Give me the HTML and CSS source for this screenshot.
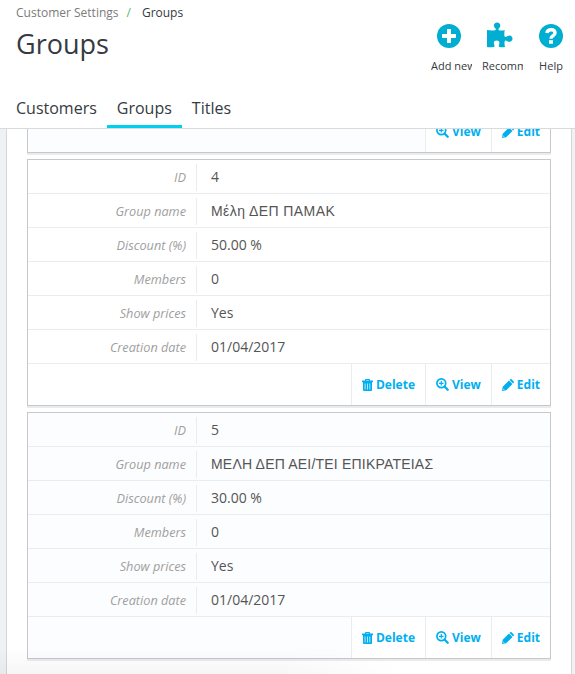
FILE: index.html
```html
<!DOCTYPE html>
<html lang="en">
<head>
<meta charset="utf-8">
<title>Groups</title>
<link rel="stylesheet" href="styles.css">
</head>
<body>
<svg class="defs" aria-hidden="true">
  <symbol id="trash" viewBox="0 0 11 12"><path fill-rule="evenodd" d="M0 1.500h3V.9Q3 0 3.900 0h3.200Q8 0 8 .9v.6h3V3.200H0zM4.200 1v.5h2.600V1zM1 3.200h9V11q0 1-1 1H2q-1 0-1-1zM2.700 4.600v5.800h.7V4.600zm2.400 0v5.800h.7V4.600zm2.400 0v5.800h.7V4.600z"/></symbol>
  <symbol id="view" viewBox="0 0 13 13"><circle cx="5.300" cy="5.300" r="4.400" fill="none" stroke="currentColor" stroke-width="1.700"/><path d="M8.500 8.500l3.200 3.200" stroke="currentColor" stroke-width="2.300" stroke-linecap="round"/><path d="M5.300 3v4.600M3 5.300h4.600" stroke="currentColor" stroke-width="1.200"/></symbol>
  <symbol id="edit" viewBox="0 0 12 12"><path fill-rule="evenodd" d="M0 12l.7-4.200 6.300-6.300 3.500 3.500-6.300 6.300zM1.500 9.400l-.2 1.300 1.300-.2zM7.600 .9l.6-.6q.7-.6 1.400 0l2.100 2.100q.6.7 0 1.400l-.6.600z"/></symbol>
</svg>
<header class="head">
  <nav class="crumbs"><span class="parent">Customer Settings</span><span class="slash">/</span><span>Groups</span></nav>
  <div class="title-row">
    <h1>Groups</h1>
    <div class="toolbar">
      <a class="tool"><svg viewBox="0 0 28 28"><circle cx="14" cy="14" r="12"/><path class="cut" d="M12 7h4v5h5v4h-5v5h-4v-5H7v-4h5z"/></svg><span class="long">Add new</span></a>
      <a class="tool"><svg viewBox="0 0 28 28"><path d="M1 8q4 .8 8 .3 1.500-.4.300-2A3.200 3.200 0 1 1 12.900 6.300Q11.700 8.300 14 8.500q3 .1 4.800-.5-.8 3-.3 6 .4 1.500 2.300.5 1.500-1 3-1a3.200 3.200 0 1 1-2.700 5.500Q18.800 17.800 18.500 20q-.1 2.500.5 5-3 .5-5.500 0 -1.200-.5-.5-2 1.400-4.500-2.400-4.500T8.300 23q.7 1.500-.6 2Q4 25.500 1 25z"/></svg><span class="long">Recommended</span></a>
      <a class="tool"><svg viewBox="0 0 28 28"><circle cx="14" cy="14" r="12"/><path class="q" d="M9.800 11Q10.500 7.800 14 7.800q4 0 4 3.100 0 1.700-2 2.900-2 1.100-2 2.900"/><path class="cut" d="M12 18.200h4v3.500h-4z"/></svg><span class="short">Help</span></a>
    </div>
  </div>
  <nav class="tabs"><a>Customers</a><a class="active">Groups</a><a>Titles</a></nav>
</header>
<main class="panel">
  <section class="card tinted first">
    <div class="actions"><a class="act"><svg class="view"><use href="#view"/></svg>View</a><a class="act"><svg class="edit"><use href="#edit"/></svg>Edit</a></div>
  </section>
  <section class="card">
    <dl>
      <div class="row"><dt>ID</dt><dd>4</dd></div>
      <div class="row"><dt>Group name</dt><dd class="greek mixed">Μέλη ΔΕΠ ΠΑΜΑΚ</dd></div>
      <div class="row"><dt>Discount (%)</dt><dd>50.00 %</dd></div>
      <div class="row"><dt>Members</dt><dd>0</dd></div>
      <div class="row"><dt>Show prices</dt><dd>Yes</dd></div>
      <div class="row"><dt>Creation date</dt><dd>01/04/2017</dd></div>
    </dl>
    <div class="actions"><a class="act"><svg class="trash"><use href="#trash"/></svg>Delete</a><a class="act"><svg class="view"><use href="#view"/></svg>View</a><a class="act"><svg class="edit"><use href="#edit"/></svg>Edit</a></div>
  </section>
  <section class="card tinted">
    <dl>
      <div class="row"><dt>ID</dt><dd>5</dd></div>
      <div class="row"><dt>Group name</dt><dd class="greek">ΜΕΛΗ ΔΕΠ ΑΕΙ/ΤΕΙ ΕΠΙΚΡΑΤΕΙΑΣ</dd></div>
      <div class="row"><dt>Discount (%)</dt><dd>30.00 %</dd></div>
      <div class="row"><dt>Members</dt><dd>0</dd></div>
      <div class="row"><dt>Show prices</dt><dd>Yes</dd></div>
      <div class="row"><dt>Creation date</dt><dd>01/04/2017</dd></div>
    </dl>
    <div class="actions"><a class="act"><svg class="trash"><use href="#trash"/></svg>Delete</a><a class="act"><svg class="view"><use href="#view"/></svg>View</a><a class="act"><svg class="edit"><use href="#edit"/></svg>Edit</a></div>
  </section>
</main>
<div class="status-shade"></div>
</body>
</html>
```
FILE: styles.css
```css
* { box-sizing: border-box; }
body { margin: 0; height: 674px; overflow: hidden; background: #eff1f2; font-family: "Open Sans", "Liberation Sans", sans-serif; color: #363a41; display: flex; flex-direction: column; }
.defs { position: absolute; width: 0; height: 0; }
.head { flex: none; height: 129px; background: #fff; border-bottom: 1px solid #d8dbde; display: flex; flex-direction: column; }
.crumbs { height: 24px; padding-left: 16px; font-size: 12px; line-height: 25px; display: flex; }
.parent { color: #7b7b7b; }
.slash { color: #4cbb6c; margin: 0 11px 0 8px; }
.title-row { height: 64px; display: flex; justify-content: space-between; padding-left: 16px; }
h1 { margin: 0; font-size: 27px; font-weight: 400; line-height: 39px; }
.toolbar { display: flex; gap: 10px; padding-right: 4px; }
.tool { width: 41px; text-align: center; font-size: 11px; line-height: 16px; color: #363a41; display: flex; flex-direction: column; align-items: center; margin-top: -2px; }
.tool svg { width: 28px; height: 28px; fill: #00aed2; flex: none; margin-bottom: 8px; }
.tool svg .cut { fill: #fff; }
.tool svg .q { fill: none; stroke: #fff; stroke-width: 3.4; }
.tool span { flex: none; overflow: hidden; white-space: nowrap; }
.tool .long { width: 41px; margin-left: 6px; text-align: left; }
.tool .short { margin-left: 1px; }
.tabs { height: 40px; display: flex; padding-left: 6px; font-size: 16px; line-height: 41px; }
.tabs a { padding: 0 10px; height: 40px; }
.tabs .active { border-bottom: 3px solid #00cff0; }
.panel { flex: 1; margin: 0 3px 0 6px; border: solid #d3d8db; border-width: 0 1px; background: #fff; padding: 0 20px; }
.card { border: 1px solid #c8c8ca; box-shadow: 0 2px 0 #e9ebec; background: #fff; margin-bottom: 6px; width: 524px; }
.first { border-top: 0; height: 24px; overflow: hidden; display: flex; flex-direction: column; justify-content: flex-end; }
.tinted { background: #fcfdfe; }
dl { margin: 0; }
.row { height: 34px; display: flex; align-items: center; border-bottom: 1px solid #eaedef; }
dt { width: 169px; height: 27px; padding-right: 10px; border-right: 1px solid #eaedef; text-align: right; font-style: italic; font-size: 12.7px; line-height: 27px; color: #a0a0a0; margin-top: 2px; }
dd { margin: 0 0 0 14px; font-size: 14px; line-height: 32px; color: #555; }
.greek { font-family: "Liberation Sans", Arial, sans-serif; letter-spacing: .2px; }
.mixed { letter-spacing: .42px; }
.actions { height: 41px; flex: none; display: flex; justify-content: flex-end; }
.act { border-left: 1px solid #eaedef; background: #fff; color: #00aff0; font-size: 12px; font-weight: 700; line-height: 41px; padding: 0 10px 0 10px; display: flex; align-items: center; gap: 3px; }
.act svg { flex: none; }
.trash { width: 11px; height: 12px; fill: currentColor; }
.view { width: 13px; height: 13px; }
.edit { width: 12px; height: 12px; fill: currentColor; }
.status-shade { position: absolute; left: 0; bottom: 0; width: 400px; height: 26px; background: linear-gradient(transparent, rgba(0,0,0,.035)); -webkit-mask-image: linear-gradient(90deg, #000 70%, transparent); mask-image: linear-gradient(90deg, #000 70%, transparent); }
```
